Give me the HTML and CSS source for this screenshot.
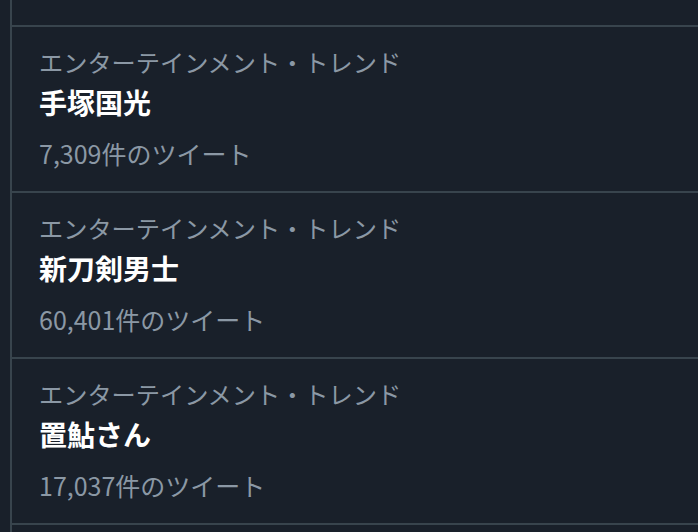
FILE: index.html
```html
<!DOCTYPE html>
<html>
  <head>
    <title>トレンド</title>
    <link rel="stylesheet" href="styles.css">
  </head>
  <body>
    <div class="timeline">
      <div class="trend-top"></div>
      <div class="trend">
        <div class="category">エンターテインメント・トレンド</div>
        <div class="title">手塚国光</div>
        <div class="count">7,309件のツイート</div>
      </div>
      <div class="trend">
        <div class="category">エンターテインメント・トレンド</div>
        <div class="title">新刀剣男士</div>
        <div class="count">60,401件のツイート</div>
      </div>
      <div class="trend">
        <div class="category">エンターテインメント・トレンド</div>
        <div class="title">置鮎さん</div>
        <div class="count">17,037件のツイート</div>
      </div>
    </div>
  </body>
</html>
```

FILE: styles.css
```css
body {
  margin: 0;
  background-color: #19202a;
  font-family: "Noto Sans CJK JP", "Noto Sans", sans-serif;
  overflow: hidden;
}
.timeline {
  margin-left: 10px;
  min-height: 532px;
  border-left: 2px solid #38444d;
}
.trend-top {
  height: 25px;
  border-bottom: 2px solid #38444d;
}
.trend {
  padding: 19px 0 22px 27px;
  border-bottom: 2px solid #38444d;
}
.category {
  font-size: 24.2px;
  line-height: 32px;
  color: #8b98a5;
}
.title {
  font-size: 28px;
  line-height: 48px;
  font-weight: bold;
  color: #ffffff;
}
.count {
  margin-top: 11px;
  font-size: 25px;
  line-height: 32px;
  color: #8b98a5;
}
```
